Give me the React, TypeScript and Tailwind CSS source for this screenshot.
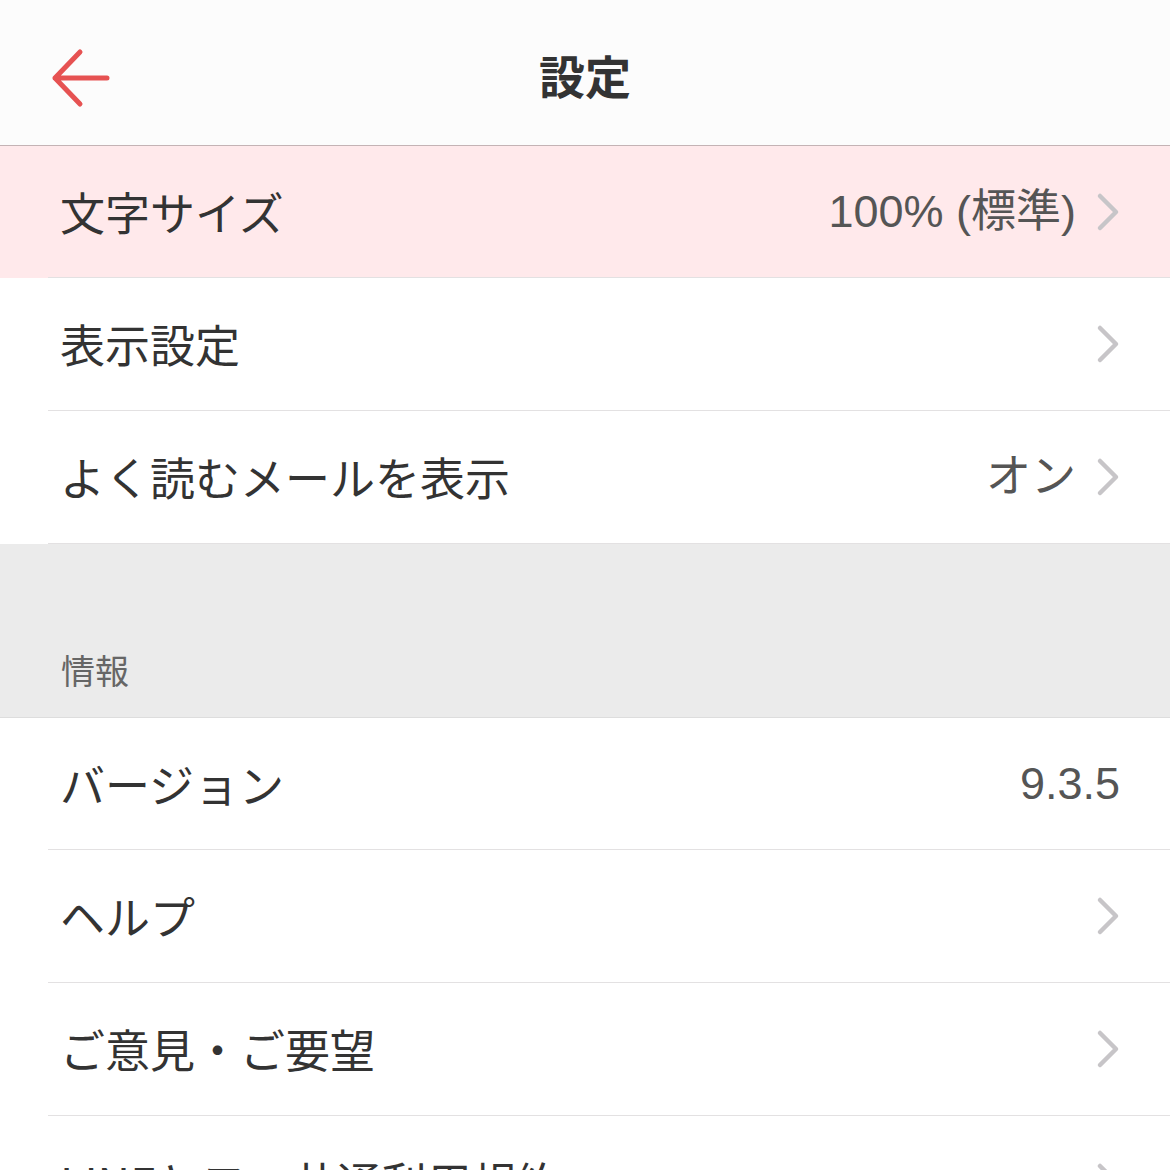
import React from 'react';

const font = { fontFamily: '"Noto Sans CJK JP", "Noto Sans", sans-serif' };
const valueFont = { fontFamily: '"Liberation Sans", "Noto Sans CJK JP", sans-serif' };

type Row = { label: string; value?: string; chevron?: boolean; active?: boolean };

const topRows: Row[] = [
  { label: '文字サイズ', value: '100% (標準)', chevron: true, active: true },
  { label: '表示設定', chevron: true },
  { label: 'よく読むメールを表示', value: 'オン', chevron: true },
];

const infoRows: Row[] = [
  { label: 'バージョン', value: '9.3.5' },
  { label: 'ヘルプ', chevron: true },
  { label: 'ご意見・ご要望', chevron: true },
  { label: 'LINEヤフー共通利用規約', chevron: true },
];

const Chevron = () => (
  <svg width="24" height="40" viewBox="0 0 24 40" className="ml-[20px] shrink-0">
    <path d="M4 4 L20 20 L4 36" fill="none" stroke="#c7c5c8" strokeWidth="4.5" strokeLinecap="round" strokeLinejoin="round" />
  </svg>
);

const SettingRow = ({ row, first }: { row: Row; first?: boolean }) => (
  <div className={row.active ? 'bg-[#ffe9eb]' : 'bg-white'}>
    <div
      className={`ml-[48px] flex items-center border-b border-[#e3e1e2] pr-[50px] ${
        first ? 'h-[132px]' : 'h-[133px]'
      }`}
    >
      <span className="ml-[12px] text-[45px] text-[#333333]">{row.label}</span>
      <div className="ml-auto flex items-center">
        {row.value && (
          <span className="whitespace-pre text-[45px] text-[#555555]" style={valueFont}>
            {row.value}
          </span>
        )}
        {row.chevron && <Chevron />}
      </div>
    </div>
  </div>
);

export default function App() {
  return (
    <div className="h-[1170px] w-[1170px] overflow-hidden bg-white" style={font}>
      <header className="relative flex h-[146px] items-center justify-center border-b border-[#c4b3b5] bg-[#fcfcfc]">
        <svg width="60" height="60" viewBox="0 0 60 60" className="absolute left-[51px] top-[48px]">
          <path d="M29 4 L4 30 L29 56 M4 30 L56 30" fill="none" stroke="#e65252" strokeWidth="5" strokeLinecap="round" strokeLinejoin="round" />
        </svg>
        <h1 className="pt-[4px] text-[46px] font-bold text-[#333333]">設定</h1>
      </header>
      {topRows.map((r, i) => (
        <SettingRow key={r.label} row={r} first={i === 0} />
      ))}
      <div className="flex h-[174px] items-end border-b border-[#dddddd] bg-[#ebebeb] pb-[22px] pl-[61px]">
        <span className="text-[34px] text-[#666666]">情報</span>
      </div>
      {infoRows.map((r, i) => (
        <SettingRow key={r.label} row={r} first={i === 0} />
      ))}
    </div>
  );
}
